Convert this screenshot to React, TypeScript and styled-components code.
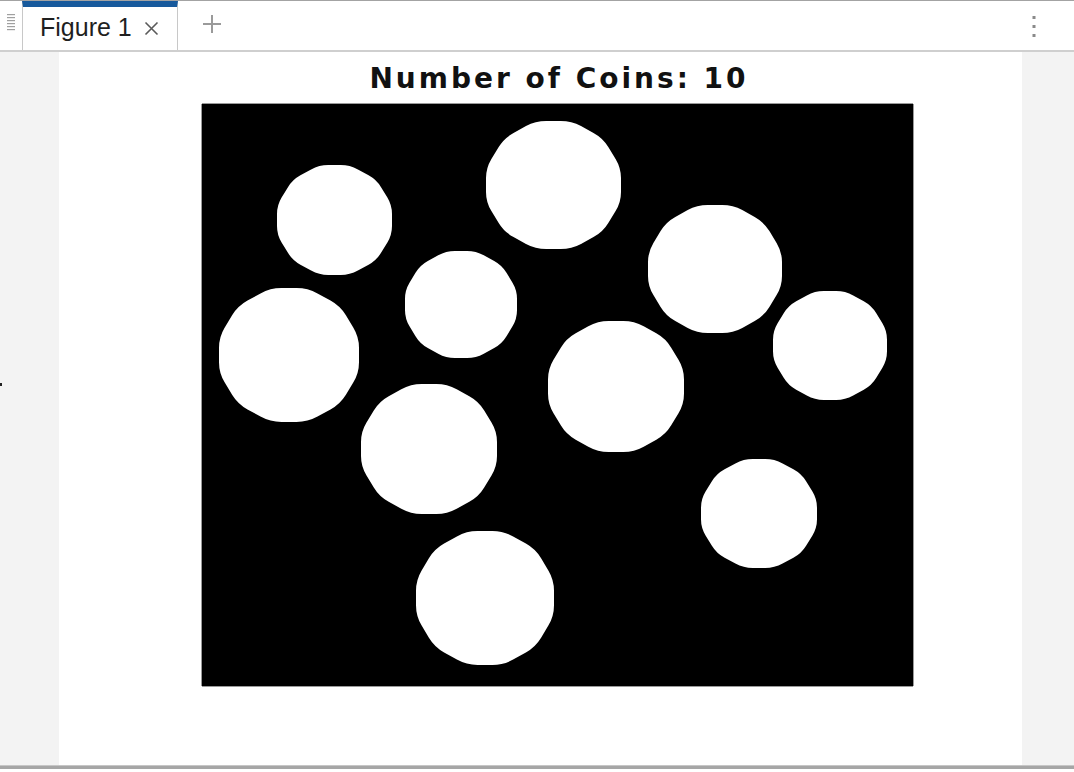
import React from "react";
import styled, { createGlobalStyle } from "styled-components";

const GlobalStyle = createGlobalStyle`
  html, body { margin: 0; padding: 0; background: #ffffff; }
  body { font-family: "Liberation Sans", Arial, sans-serif; }
`;

const Frame = styled.div`
  width: 1074px;
  height: 772px;
  display: flex;
  flex-direction: column;
  overflow: hidden;
  background: #ffffff;
`;

const TabBar = styled.div`
  height: 49px;
  flex: none;
  display: flex;
  align-items: stretch;
  border-top: 1px solid #a3a3a3;
  border-bottom: 2px solid #cfcfcf;
  background: #ffffff;
`;

const GripSlot = styled.div`
  width: 22px;
  display: flex;
  align-items: flex-start;
  justify-content: center;
  padding-top: 12px;
  box-sizing: border-box;
`;

const Tab = styled.div`
  width: 156px;
  box-sizing: border-box;
  border-top: 6px solid #17599c;
  border-left: 1px solid #c8c8c8;
  border-right: 1px solid #c8c8c8;
  display: flex;
  align-items: center;
  padding: 0 0 0 17px;
  gap: 12px;
`;

const TabLabel = styled.span`
  font-family: "Liberation Sans", Arial, sans-serif;
  font-size: 25px;
  color: #1f1f1f;
  margin-top: -3px;
`;

const CloseGlyph = styled.span`
  display: flex;
  align-items: center;
  margin-top: -1px;
`;

const AddButton = styled.div`
  width: 68px;
  display: flex;
  align-items: center;
  justify-content: center;
  padding-bottom: 3px;
  box-sizing: border-box;
`;

const Spacer = styled.div`
  flex: 1;
`;

const MenuButton = styled.div`
  width: 80px;
  display: flex;
  align-items: flex-start;
  justify-content: center;
  padding-top: 15px;
  box-sizing: border-box;
`;

const Body = styled.div`
  flex: 1;
  display: flex;
  align-items: stretch;
`;

const SidePanel = styled.div<{ $w: number }>`
  width: ${(p) => p.$w}px;
  flex: none;
  background: #f3f3f3;
  display: flex;
  flex-direction: column;
  box-sizing: border-box;
  padding-top: 331px;
`;

const EdgeMark = styled.div`
  width: 2px;
  height: 3px;
  background: #222;
`;

const FigureArea = styled.div`
  flex: 1;
  background: #ffffff;
  display: flex;
  flex-direction: column;
  padding-left: 143px;
  box-sizing: border-box;
`;

const Axes = styled.div`
  width: 711px;
  display: flex;
  flex-direction: column;
  align-items: center;
`;

const Title = styled.div`
  height: 52px;
  display: flex;
  align-items: center;
  justify-content: center;
  font-family: "DejaVu Sans", Verdana, sans-serif;
  font-weight: bold;
  font-size: 28px;
  letter-spacing: 3px;
  color: #111111;
  padding-left: 3px;
  padding-top: 1px;
  box-sizing: border-box;
  white-space: nowrap;
`;

const ImageBox = styled.div`
  width: 711px;
  height: 582px;
  background: #000;
  box-shadow: 0 -1px 0 #9a9a9a, -1px 0 0 #9a9a9a, 0 1px 0 #9a9a9a, 1px 0 0 #9a9a9a;
`;

const Footer = styled.div`
  height: 7px;
  flex: none;
  border-top: 1px solid #c6c6c6;
  box-sizing: border-box;
  background: linear-gradient(#a6a6a6 0, #a6a6a6 3px, #ffffff 3px);
`;

type Coin = { x0: number; x1: number; y0: number; y1: number };

const coins: Coin[] = [
  { x0: 277, x1: 392, y0: 165, y1: 275 },
  { x0: 486, x1: 621, y0: 121, y1: 249 },
  { x0: 405, x1: 517, y0: 251, y1: 358 },
  { x0: 648, x1: 782, y0: 205, y1: 333 },
  { x0: 219, x1: 359, y0: 288, y1: 422 },
  { x0: 548, x1: 684, y0: 321, y1: 452 },
  { x0: 773, x1: 887, y0: 291, y1: 400 },
  { x0: 361, x1: 497, y0: 384, y1: 514 },
  { x0: 701, x1: 817, y0: 459, y1: 568 },
  { x0: 416, x1: 554, y0: 531, y1: 665 },
];

function coinPath(c: Coin): string {
  const ox = 202;
  const oy = 104;
  const cx = (c.x0 + c.x1) / 2 - ox;
  const cy = (c.y0 + c.y1) / 2 - oy;
  const rx = (c.x1 - c.x0) / 2;
  const ry = (c.y1 - c.y0) / 2;
  const k = 1 / Math.cos(Math.PI / 12);
  const v: [number, number][] = [];
  for (let i = 0; i < 12; i++) {
    const a = (Math.PI / 12) * (1 + 2 * i);
    v.push([cx + rx * k * Math.cos(a), cy + ry * k * Math.sin(a)]);
  }
  const t = 0.3;
  const lerp = (p: [number, number], q: [number, number], f: number) =>
    [p[0] + (q[0] - p[0]) * f, p[1] + (q[1] - p[1]) * f] as [number, number];
  const f = (n: number) => n.toFixed(1);
  let d = "";
  for (let i = 0; i < 12; i++) {
    const prev = v[(i + 11) % 12];
    const cur = v[i];
    const next = v[(i + 1) % 12];
    const a = lerp(cur, prev, t);
    const b = lerp(cur, next, t);
    d += `${i === 0 ? "M" : "L"}${f(a[0])},${f(a[1])} Q${f(cur[0])},${f(cur[1])} ${f(b[0])},${f(b[1])} `;
  }
  return d + "Z";
}

const Grip = () => (
  <svg width="8" height="20" viewBox="0 0 8 20">
    {[1, 4, 7, 10, 13, 16].map((y) => (
      <rect key={y} x="0" y={y} width="8" height="1.2" fill="#a0a0a0" />
    ))}
  </svg>
);

const CloseIcon = () => (
  <svg width="15" height="15" viewBox="0 0 15 15">
    <path d="M1.5 1.5 L13.5 13.5 M13.5 1.5 L1.5 13.5" stroke="#5a5a5a" strokeWidth="1.6" />
  </svg>
);

const PlusIcon = () => (
  <svg width="20" height="20" viewBox="0 0 20 20">
    <path d="M10 1 V19 M1 10 H19" stroke="#9a9a9a" strokeWidth="2" />
  </svg>
);

const Kebab = () => (
  <svg width="4" height="22" viewBox="0 0 4 22">
    {[0, 9, 18].map((y) => (
      <rect key={y} x="0.5" y={y} width="3" height="3" fill="#8a8a8a" />
    ))}
  </svg>
);

export default function App() {
  return (
    <Frame>
      <GlobalStyle />
      <TabBar>
        <GripSlot>
          <Grip />
        </GripSlot>
        <Tab>
          <TabLabel>Figure 1</TabLabel>
          <CloseGlyph>
            <CloseIcon />
          </CloseGlyph>
        </Tab>
        <AddButton>
          <PlusIcon />
        </AddButton>
        <Spacer />
        <MenuButton>
          <Kebab />
        </MenuButton>
      </TabBar>
      <Body>
        <SidePanel $w={59}>
          <EdgeMark />
        </SidePanel>
        <FigureArea>
          <Axes>
            <Title>Number of Coins: 10</Title>
            <ImageBox>
              <svg width="711" height="582" viewBox="0 0 711 582">
                {coins.map((c, i) => (
                  <path key={i} d={coinPath(c)} fill="#ffffff" />
                ))}
              </svg>
            </ImageBox>
          </Axes>
        </FigureArea>
        <SidePanel $w={52} />
      </Body>
      <Footer />
    </Frame>
  );
}
